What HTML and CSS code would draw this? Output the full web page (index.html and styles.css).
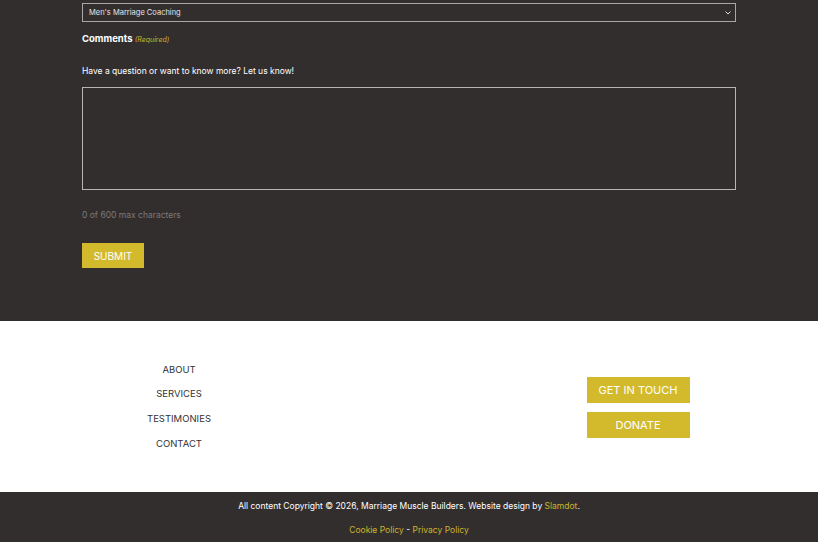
FILE: index.html
```html
<!DOCTYPE html>
<html lang="en">
<head>
    <meta charset="UTF-8">
    <meta name="viewport" content="width=device-width, initial-scale=1.0">
    <title>Contact - Marriage Muscle Builders</title>
    <link rel="stylesheet" href="styles.css">
</head>
<body>
    <section class="form-section">
        <div class="field">
            <div class="select-box">
                <span>Men's Marriage Coaching</span>
                <svg class="chevron" width="6" height="4" viewBox="0 0 6 4"><path d="M0.5 0.5 L3 3 L5.5 0.5" fill="none" stroke="#ddd" stroke-width="1"/></svg>
            </div>
        </div>

        <div class="field">
            <label class="field-label">Comments <span class="required">(Required)</span></label>
            <p class="field-desc">Have a question or want to know more? Let us know!</p>
            <div class="textarea"></div>
            <p class="char-count">0 of 600 max characters</p>
        </div>

        <button class="submit-btn">SUBMIT</button>
    </section>

    <section class="footer-links">
        <nav class="footer-nav">
            <a href="#">ABOUT</a>
            <a href="#">SERVICES</a>
            <a href="#">TESTIMONIES</a>
            <a href="#">CONTACT</a>
        </nav>
        <div></div>
        <div class="footer-actions">
            <a class="action-btn" href="#">GET IN TOUCH</a>
            <a class="action-btn" href="#">DONATE</a>
        </div>
    </section>

    <footer class="copyright">
        <p>All content Copyright &copy; 2026, Marriage Muscle Builders. Website design by <a href="#">Slamdot</a>.</p>
        <p><a href="#">Cookie Policy</a> - <a href="#">Privacy Policy</a></p>
    </footer>
</body>
</html>
```

FILE: styles.css
```css
body {
    margin: 0;
    font-family: 'Inter', 'DejaVu Sans', sans-serif;
    background-color: #fff;
}
a {
    text-decoration: none;
}
p {
    margin: 0;
}

/* form area */
.form-section {
    background-color: #332e2e;
    color: #fff;
    padding: 3px 82px 0;
    height: 318px;
}
.select-box {
    height: 17px;
    border: 1px solid #a9a6a6;
    display: flex;
    align-items: center;
    justify-content: space-between;
    padding: 0 4px 0 6px;
    font-size: 7.5px;
    color: #e6e4e4;
}
.field-label {
    display: block;
    margin-top: 11px;
    font-size: 9.5px;
    font-weight: 700;
}
.required {
    color: #cdb52d;
    font-size: 7px;
    font-style: italic;
    font-weight: 400;
}
.field-desc {
    margin-top: 22px;
    font-size: 8.5px;
}
.textarea {
    margin-top: 11px;
    height: 101px;
    border: 1px solid #b7b4b4;
}
.char-count {
    margin-top: 20px;
    font-size: 8.5px;
    color: #7c7878;
}
.submit-btn {
    margin-top: 23px;
    background-color: #d3ba2c;
    color: #fff;
    border: none;
    width: 62px;
    height: 25px;
    font-family: inherit;
    font-size: 10px;
    padding: 0;
}

/* footer navigation and buttons */
.footer-links {
    display: grid;
    grid-template-columns: 230px 1fr 230px;
    padding: 1px 65px 0 64px;
    height: 170px;
    align-items: center;
}
.footer-nav {
    display: flex;
    flex-direction: column;
    align-items: center;
    gap: 12.3px;
}
.footer-nav a {
    color: #333;
    font-size: 9.5px;
    line-height: 12.5px;
}
.footer-actions {
    display: flex;
    flex-direction: column;
    align-items: center;
    gap: 9px;
}
.action-btn {
    background-color: #d3ba2c;
    color: #fff;
    width: 103px;
    height: 26px;
    display: flex;
    align-items: center;
    justify-content: center;
    font-size: 11px;
}

.copyright {
    background-color: #332e2e;
    color: #fff;
    text-align: center;
    font-size: 8.5px;
    padding: 9px 0 0;
    height: 41px;
    display: flex;
    flex-direction: column;
    gap: 14px;
}
.copyright a {
    color: #cdb52d;
}
```
